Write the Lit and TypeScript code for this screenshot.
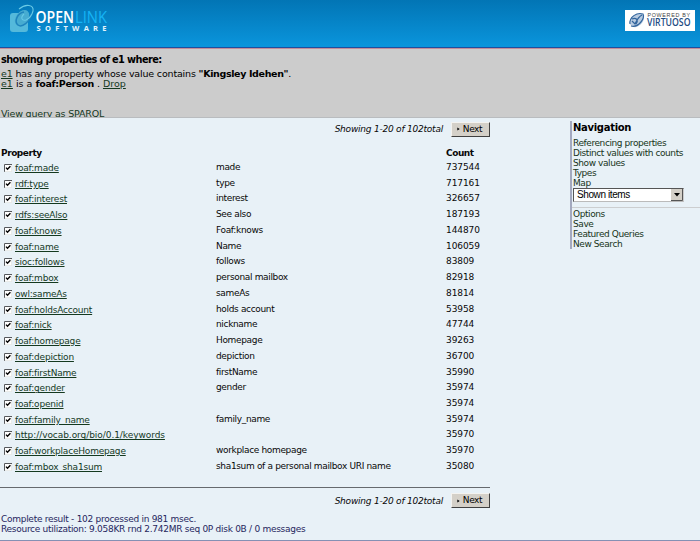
import { LitElement, html, css, svg } from "lit";
import { customElement } from "lit/decorators.js";

const ROWS: [string, string, string][] = [
  ["foaf:made", "made", "737544"],
  ["rdf:type", "type", "717161"],
  ["foaf:interest", "interest", "326657"],
  ["rdfs:seeAlso", "See also", "187193"],
  ["foaf:knows", "Foaf:knows", "144870"],
  ["foaf:name", "Name", "106059"],
  ["sioc:follows", "follows", "83809"],
  ["foaf:mbox", "personal mailbox", "82918"],
  ["owl:sameAs", "sameAs", "81814"],
  ["foaf:holdsAccount", "holds account", "53958"],
  ["foaf:nick", "nickname", "47744"],
  ["foaf:homepage", "Homepage", "39263"],
  ["foaf:depiction", "depiction", "36700"],
  ["foaf:firstName", "firstName", "35990"],
  ["foaf:gender", "gender", "35974"],
  ["foaf:openid", "", "35974"],
  ["foaf:family_name", "family_name", "35974"],
  ["http://vocab.org/bio/0.1/keywords", "", "35970"],
  ["foaf:workplaceHomepage", "workplace homepage", "35970"],
  ["foaf:mbox_sha1sum", "sha1sum of a personal mailbox URI name", "35080"],
];

const check = svg`
  <rect x="0" y="0" width="8" height="8" fill="#fff"></rect>
  <path d="M0.5 8V0.5H8" fill="none" stroke="#55585c" stroke-width="1"></path>
  <path d="M0.5 7.7H7.7V1" fill="none" stroke="#d4d6d4" stroke-width="0.6"></path>
  <path d="M2 3.6L3.5 5.3L6.4 2.2" fill="none" stroke="#000" stroke-width="1.4"></path>`;

@customElement("app-root")
export class AppRoot extends LitElement {
  static styles = css`
    :host {
      display: flex;
      flex-direction: column;
      box-sizing: border-box;
      width: 700px;
      height: 541px;
      overflow: hidden;
      background: #e8f1f7;
      border-bottom: 1px solid #8590b4;
      font: 9px/10px "DejaVu Sans", Verdana, sans-serif;
      color: #080808;
      white-space: nowrap;
    }
    a { color: #14391f; text-decoration: underline; text-underline-offset: 1px; text-decoration-thickness: 1px; }
    .banner {
      display: flex;
      justify-content: space-between;
      box-sizing: border-box;
      height: 48px;
      flex: none;
      background: linear-gradient(#0275b5, #0a95dc);
      border-bottom: 1px solid #1c50a0;
    }
    .banner svg { display: block; }
    .query {
      box-sizing: border-box;
      height: 70px;
      flex: none;
      overflow: hidden;
      background: #ccc;
      border-top: 1px solid #c48d98;
      border-bottom: 1px solid #b9bcbf;
      padding: 5px 0 0 1px;
      color: #000;
    }
    .title { font-weight: bold; font-size: 9.8px; line-height: 11px; letter-spacing: -0.62px; margin-bottom: 4px; }
    .cond { font-size: 9.5px; letter-spacing: -0.17px; }
    .cond b { letter-spacing: -0.36px; }
    .c2 { letter-spacing: 0; }
    .c2 b { letter-spacing: -0.32px; }
    .sparql { margin-top: 20px; font-size: 9.5px; letter-spacing: -0.19px; }
    .body { display: flex; justify-content: space-between; flex: 1; }
    .main { width: 490px; }
    .pager { display: flex; justify-content: flex-end; align-items: center; height: 16px; font-style: italic; gap: 8px; letter-spacing: -0.22px; }
    .top { margin-top: 3px; }
    .next {
      display: flex; align-items: center; justify-content: center; gap: 3px;
      box-sizing: border-box; width: 39px; height: 15px; margin: 0;
      padding: 0 2px 0 0;
      background: #d4d0c8;
      border: 1px solid; border-color: #f4f3f0 #404040 #404040 #f4f3f0;
      font: 9px/11px "DejaVu Sans", Verdana, sans-serif; color: #000;
      letter-spacing: -0.4px;
    }
    .next svg { width: 3px; height: 4px; }
    .row { display: grid; grid-template-columns: 15px 201px 230px 1fr; height: 15.74px; letter-spacing: -0.08px; }
    .head { font-weight: bold; height: 14px; margin-top: 11px; letter-spacing: -0.45px; }
    .head span:first-child { grid-column: 1 / 4; padding-left: 1px; }
    .row svg { width: 8px; height: 8px; margin: 2px 0 0 4px; }
    .prop { padding-top: 1px; letter-spacing: -0.2px; }
    .long { letter-spacing: -0.06px; }
    .desc { letter-spacing: -0.34px; }
    .rule { border-top: 1px solid #666a6e; margin-top: 10px; }
    .bottom { margin-top: 5px; }
    .stats { color: #26265e; padding-left: 1px; margin-top: 5px; letter-spacing: -0.28px; }
    .nav { width: 130px; height: 128px; margin-top: 3px; box-sizing: border-box; border-left: 2px solid #a3a9bf; color: #173420; letter-spacing: -0.42px; }
    .nav h2 { margin: 2px 0 5px 1px; font-size: 10px; line-height: 10px; letter-spacing: -0.3px; color: #000; }
    .nav div { padding-left: 1px; height: 10px; }
    .nav .select {
      display: flex; align-items: center; box-sizing: border-box; width: 111px; height: 14px; margin-left: 1px;
      background: #fff; border: 1px solid; border-color: #555 #ccc #bbb #555; color: #000;
      padding: 0 0 0 3px; justify-content: space-between;
      font-family: "Liberation Sans", Arial, sans-serif; font-size: 10px; letter-spacing: -0.4px;
    }
    .arrow { width: 12px; height: 12px; }
    .nav .options { border-top: 1px solid #ccced0; margin-top: 5px; padding-top: 1px; }
  `;

  private pager(cls: string) {
    return html`<div class="pager ${cls}">
      <span class="showing">Showing 1-20 of 102total</span>
      <button class="next"><svg viewBox="0 0 3 5"><path d="M0 0.5L3 2.5L0 4.5z"></path></svg>Next</button>
    </div>`;
  }

  render() {
    return html`
      <div class="banner">
        <svg width="120" height="47" viewBox="0 0 120 47">
          <rect x="10" y="13" width="18" height="19" rx="3" fill="#54b9db"></rect>
          <ellipse cx="22" cy="18" rx="6" ry="9" transform="rotate(38 22 18)" fill="#47acd1"></ellipse>
          <path d="M24 12C17 13 14 22 18 25C22 28 30 22 31 14" fill="none" stroke="#1f84bd" stroke-width="1.5"></path>
          <path d="M19 9C26 3 34 5 33 11C32 15 30 18 26 20C22 21 20 18 24 14" fill="none" stroke="#68c9e6" stroke-width="1.1"></path>
          <text x="35.5" y="22.5" font-family="Open Sans, sans-serif" font-weight="600" font-size="16" fill="#fff" textLength="38.5" lengthAdjust="spacingAndGlyphs">OPEN</text>
          <text x="75" y="22.5" font-family="Open Sans, sans-serif" font-size="16" fill="#16b4f5" textLength="32" lengthAdjust="spacingAndGlyphs">LINK</text>
          <text x="36.5" y="31" font-family="Open Sans, sans-serif" font-weight="700" font-size="7.5" fill="#e4f4fc" textLength="70">SOFTWARE</text>
        </svg>
        <svg width="76" height="47" viewBox="0 0 76 47">
          <rect x="1" y="10" width="70" height="21" fill="#fff"></rect>
          <ellipse cx="13" cy="20.5" rx="8" ry="5.5" transform="rotate(-42 13 20.5)" fill="#b9cbe0"></ellipse>
          <path d="M6 24C5 17 13 12 19 14C21 18 15 28 7 26M8 21L11 24C13 20 14 17 18 15M8 19C12 17 15 20 12 24" fill="none" stroke="#33659d" stroke-width="1.2"></path>
          <text x="23.5" y="17.3" font-family="Liberation Sans, sans-serif" font-size="5.4" fill="#444" textLength="42.5">POWERED BY</text>
          <text x="23" y="26" font-family="Open Sans, sans-serif" font-weight="600" font-size="10.5" fill="#1d4c83" textLength="43.5" lengthAdjust="spacingAndGlyphs">VIRTUOSO</text>
        </svg>
      </div>
      <div class="query">
        <div class="title">showing properties of e1 where:</div>
        <div class="cond"><a>e1</a> has any property whose value contains <b>"Kingsley Idehen"</b>.</div>
        <div class="cond c2"><a>e1</a> is a <b>foaf:Person</b> . <a>Drop</a></div>
        <div class="sparql"><a>View query as SPARQL</a></div>
      </div>
      <div class="body">
        <div class="main">
          ${this.pager("top")}
          <div class="row head"><span>Property</span><span>Count</span></div>
          ${ROWS.map(([p, d, c]) => html`<div class="row">
            <svg viewBox="0 0 8 8">${check}</svg>
            <span class="prop ${p.length > 25 ? "long" : ""}"><a>${p}</a></span><span class="desc">${d}</span><span>${c}</span>
          </div>`)}
          <div class="rule"></div>
          ${this.pager("bottom")}
          <div class="stats">Complete result - 102 processed in 981 msec.<br />Resource utilization: 9.058KR rnd 2.742MR seq 0P disk 0B / 0 messages</div>
        </div>
        <div class="nav">
          <h2>Navigation</h2>
          <div>Referencing properties</div>
          <div>Distinct values with counts</div>
          <div>Show values</div>
          <div>Types</div>
          <div>Map</div>
          <div class="select">Shown items
            <svg class="arrow" viewBox="0 0 12 12"><rect width="12" height="12" fill="#d4d0c8"></rect><path d="M0 11.5H11.5V0" fill="none" stroke="#555"></path><path d="M3 4H9L6 7.5z"></path></svg>
          </div>
          <div class="options">Options</div>
          <div>Save</div>
          <div>Featured Queries</div>
          <div>New Search</div>
        </div>
      </div>`;
  }
}
